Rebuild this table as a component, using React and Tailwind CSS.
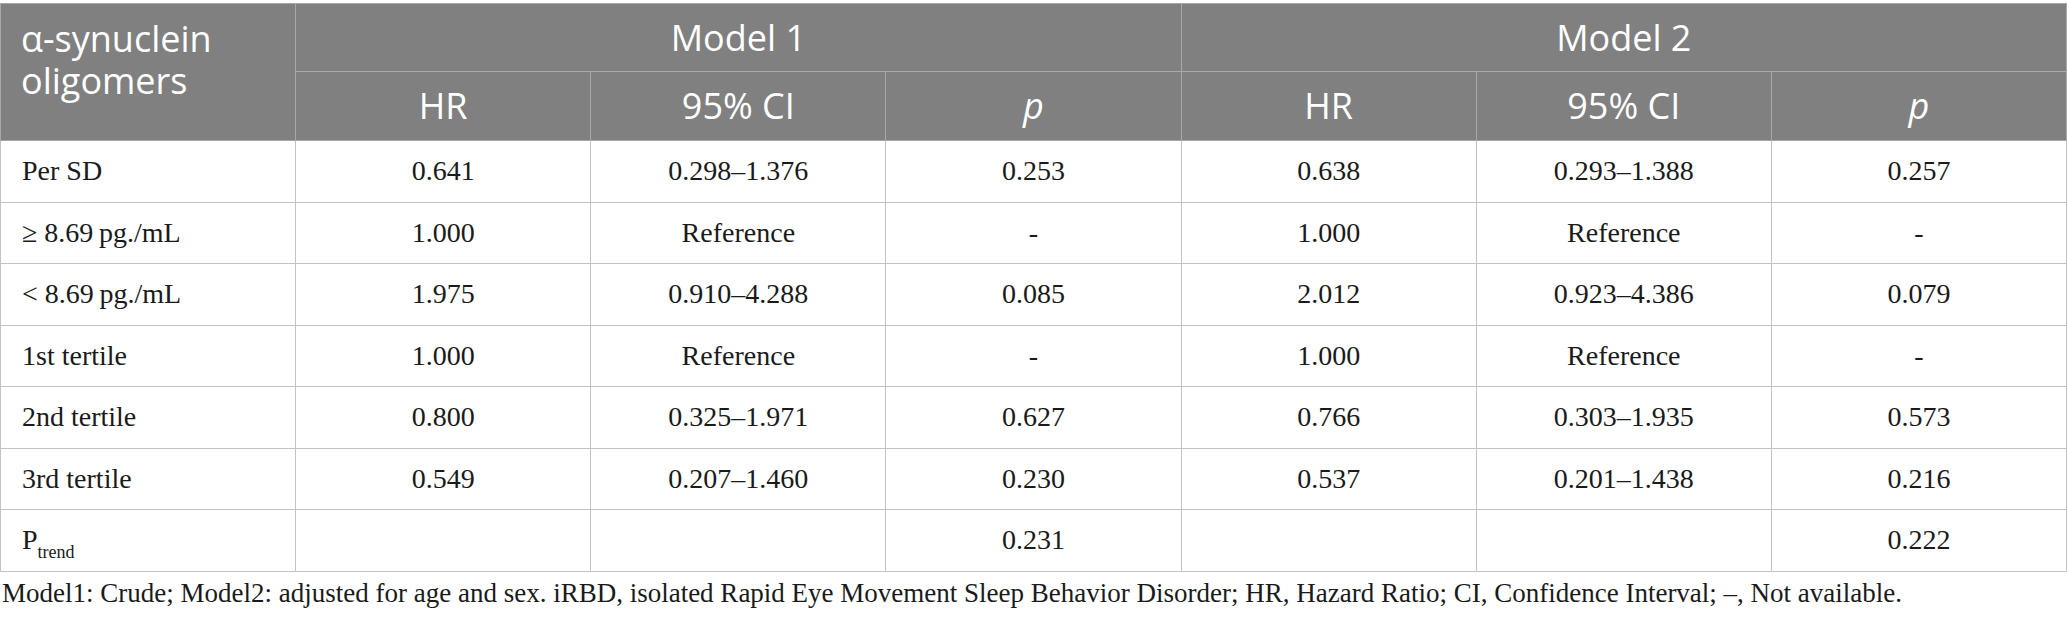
import React from 'react';

const ROWS = [
  { label: 'Per SD', m1: ['0.641', '0.298–1.376', '0.253'], m2: ['0.638', '0.293–1.388', '0.257'] },
  { label: '≥ 8.69\u2009pg./mL', m1: ['1.000', 'Reference', '-'], m2: ['1.000', 'Reference', '-'] },
  { label: '< 8.69\u2009pg./mL', m1: ['1.975', '0.910–4.288', '0.085'], m2: ['2.012', '0.923–4.386', '0.079'] },
  { label: '1st tertile', m1: ['1.000', 'Reference', '-'], m2: ['1.000', 'Reference', '-'] },
  { label: '2nd tertile', m1: ['0.800', '0.325–1.971', '0.627'], m2: ['0.766', '0.303–1.935', '0.573'] },
  { label: '3rd tertile', m1: ['0.549', '0.207–1.460', '0.230'], m2: ['0.537', '0.201–1.438', '0.216'] },
  { label: 'trend', m1: ['', '', '0.231'], m2: ['', '', '0.222'] },
];

const head = 'border border-[#a9a9a9] bg-[#808080] text-white font-normal';
const cell = 'border border-[#c2c2c2] text-center align-middle';

const App = () => {
  return (
    <div className="w-[2067px] bg-white pt-[3px] text-[#1a1a1a]">
      <table className="w-full table-fixed border-collapse border border-[#c2c2c2]">
        <thead className="font-['Open_Sans',sans-serif] text-[36px] leading-[42px]">
          <tr className="h-[68px]">
            <th rowSpan={2} className={`${head} text-left align-top pl-[20px] pt-[14px]`}>
              α-synuclein
              <br />
              oligomers
            </th>
            <th colSpan={3} className={head}>Model 1</th>
            <th colSpan={3} className={head}>Model 2</th>
          </tr>
          <tr className="h-[69px]">
            <th className={head}>HR</th>
            <th className={head}>95% CI</th>
            <th className={`${head} italic`}>p</th>
            <th className={head}>HR</th>
            <th className={head}>95% CI</th>
            <th className={`${head} italic`}>p</th>
          </tr>
        </thead>
        <tbody className="font-['Liberation_Serif',serif] text-[28px]">
          {ROWS.map((r) => (
            <tr key={r.label} className="h-[61.5px]">
              <td className="border border-[#c2c2c2] text-left pl-[21px]">
                {r.label === 'trend' ? (
                  <span>
                    P<sub className="text-[18px] align-[-4px]">trend</sub>
                  </span>
                ) : (
                  r.label
                )}
              </td>
              {[...r.m1, ...r.m2].map((v, i) => (
                <td key={i} className={cell}>{v}</td>
              ))}
            </tr>
          ))}
        </tbody>
      </table>
      <p className="font-['Liberation_Serif',serif] text-[27px] leading-[30px] pt-[6px] pl-[2px]">
        Model1: Crude; Model2: adjusted for age and sex. iRBD, isolated Rapid Eye Movement Sleep Behavior Disorder; HR, Hazard Ratio; CI, Confidence Interval; –, Not available.
      </p>
    </div>
  );
};

export default App;
